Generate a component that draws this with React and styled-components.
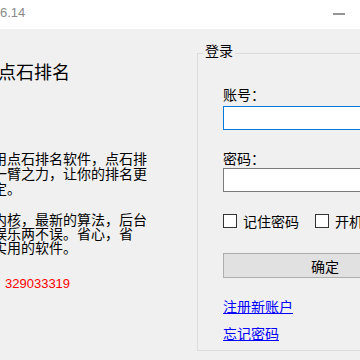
import React from "react";
import styled, { createGlobalStyle } from "styled-components";

const GlobalStyle = createGlobalStyle`
  html, body {
    margin: 0;
    padding: 0;
    background: #f0f0f0;
  }
  body {
    font-family: "Noto Sans CJK SC", "Liberation Sans", sans-serif;
  }
`;

const Window = styled.div`
  width: 360px;
  height: 360px;
  overflow: hidden;
  background: #f0f0f0;
  display: flex;
  flex-direction: column;
  font-family: "Noto Sans CJK SC", "Liberation Sans", sans-serif;
  color: #000;
`;

const TitleBar = styled.div`
  flex: none;
  height: 29px;
  background: #ffffff;
  display: flex;
  align-items: flex-start;
  justify-content: space-between;
`;

const Version = styled.span`
  font-family: "Liberation Sans", sans-serif;
  font-size: 13px;
  line-height: 16px;
  color: #8a8a8a;
  padding-top: 5px;
`;

const Controls = styled.div`
  display: flex;
  padding: 13px 15px 0 0;
`;

const MinimizeGlyph = styled.span`
  display: block;
  width: 12px;
  height: 2px;
  background: #959595;
`;

const Body = styled.div`
  flex: 1;
  min-height: 0;
  display: flex;
  align-items: flex-start;
`;

const LeftColumn = styled.div`
  flex: 0 0 197px;
  display: flex;
  flex-direction: column;
`;

const Heading = styled.h1`
  margin: 32px 0 0 -2px;
  font-size: 18px;
  line-height: 20px;
  font-weight: normal;
  white-space: nowrap;
`;

const Paragraph = styled.p`
  margin: ${(p) => p.$top}px 0 0 -7px;
  font-size: 14px;
  line-height: ${(p) => p.$lh}px;
  white-space: nowrap;
`;

const Line = styled.span`
  display: block;
`;

const Contact = styled.div`
  margin: 22px 0 0 5px;
  font-family: "Liberation Sans", sans-serif;
  font-size: 13px;
  line-height: 16px;
  color: #ff0000;
`;

const Group = styled.fieldset`
  flex: none;
  margin: 13px 0 0 0;
  padding: 0 0 9px 5px;
  width: 240px;
  min-width: 0;
  border: 1px solid #dcdcdc;
  display: flex;
  flex-direction: column;
`;

const Legend = styled.legend`
  padding: 0 2px 7px;
  font-size: 14px;
  line-height: 16px;
`;

const Form = styled.div`
  padding-left: 20px;
  display: flex;
  flex-direction: column;
  align-items: flex-start;
`;

const Label = styled.label`
  font-size: 14px;
  line-height: 16px;
  margin-top: ${(p) => p.$top}px;
`;

const Field = styled.input`
  box-sizing: border-box;
  width: 204px;
  height: 24px;
  margin: ${(p) => p.$top}px 0 0 0;
  padding: 0 2px;
  background: #ffffff;
  border: 1px solid ${(p) => (p.$focused ? "#0078d7" : "#7a7a7a")};
  outline: none;
  font-size: 14px;
`;

const CheckRow = styled.div`
  margin-top: 21px;
  height: 16px;
  display: flex;
  align-items: center;
  gap: 16px;
`;

const CheckItem = styled.label`
  display: flex;
  align-items: center;
  gap: 6px;
  font-size: 14px;
  line-height: 16px;
  white-space: nowrap;
`;

const Box = styled.input`
  appearance: none;
  -webkit-appearance: none;
  box-sizing: border-box;
  width: 14px;
  height: 14px;
  margin: 0;
  background: #ffffff;
  border: 1px solid #333333;
`;

const Button = styled.button`
  margin-top: 24px;
  width: 204px;
  height: 25px;
  padding: 0;
  background: #e1e1e1;
  border: 1px solid #adadad;
  font-family: "Noto Sans CJK SC", sans-serif;
  font-size: 14px;
  line-height: 16px;
  color: #000;
`;

const Link = styled.a`
  margin-top: ${(p) => p.$top}px;
  font-size: 14px;
  line-height: 16px;
  color: #0000ff;
  text-decoration: underline;
  cursor: pointer;
`;

export default function App() {
  return (
    <>
      <GlobalStyle />
      <Window>
        <TitleBar>
          <Version>6.14</Version>
          <Controls>
            <MinimizeGlyph />
          </Controls>
        </TitleBar>
        <Body>
          <LeftColumn>
            <Heading>点石排名</Heading>
            <Paragraph $top={70} $lh={15}>
              <Line>用点石排名软件，点石排</Line>
              <Line>一臂之力，让你的排名更</Line>
              <Line>定。</Line>
            </Paragraph>
            <Paragraph $top={16} $lh={14}>
              <Line>内核，最新的算法，后台</Line>
              <Line>娱乐两不误。省心，省</Line>
              <Line>实用的软件。</Line>
            </Paragraph>
            <Contact>329033319</Contact>
          </LeftColumn>
          <Group>
            <Legend>登录</Legend>
            <Form>
              <Label $top={21}>账号：</Label>
              <Field $top={4} $focused />
              <Label $top={20}>密码：</Label>
              <Field $top={2} type="password" />
              <CheckRow>
                <CheckItem>
                  <Box type="checkbox" />
                  记住密码
                </CheckItem>
                <CheckItem>
                  <Box type="checkbox" />
                  开机启动
                </CheckItem>
              </CheckRow>
              <Button>确定</Button>
              <Link $top={20}>注册新账户</Link>
              <Link $top={11}>忘记密码</Link>
            </Form>
          </Group>
        </Body>
      </Window>
    </>
  );
}
